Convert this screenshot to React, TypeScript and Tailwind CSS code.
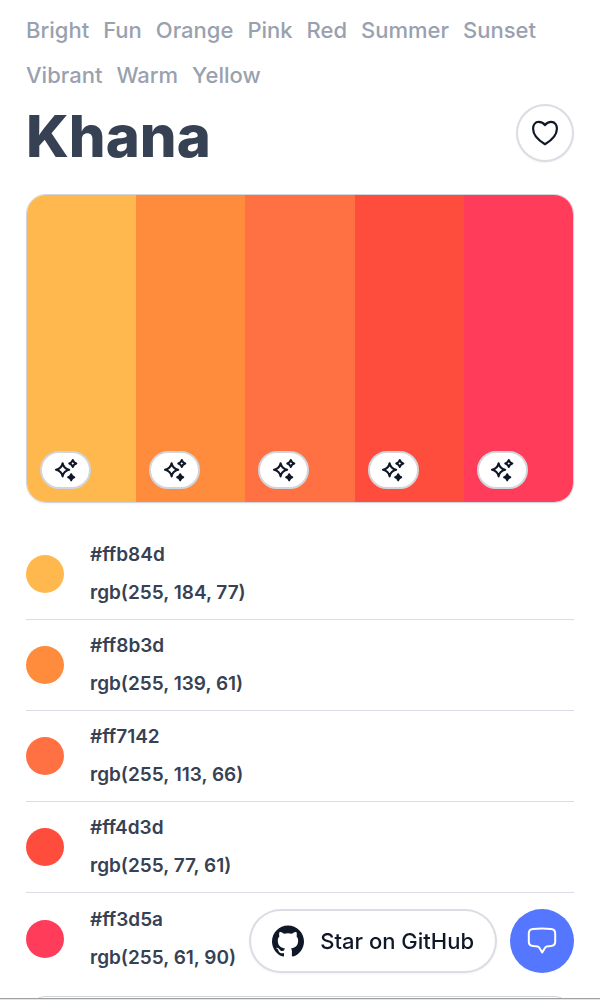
import { SiGithub } from "react-icons/si";

const tags = [
  "Bright",
  "Fun",
  "Orange",
  "Pink",
  "Red",
  "Summer",
  "Sunset",
  "Vibrant",
  "Warm",
  "Yellow",
];

const colors = [
  { hex: "#ffb84d", rgb: "rgb(255, 184, 77)", bg: "bg-[#ffb84d]" },
  { hex: "#ff8b3d", rgb: "rgb(255, 139, 61)", bg: "bg-[#ff8b3d]" },
  { hex: "#ff7142", rgb: "rgb(255, 113, 66)", bg: "bg-[#ff7142]" },
  { hex: "#ff4d3d", rgb: "rgb(255, 77, 61)", bg: "bg-[#ff4d3d]" },
  { hex: "#ff3d5a", rgb: "rgb(255, 61, 90)", bg: "bg-[#ff3d5a]" },
];

function HeartIcon() {
  return (
    <svg
      width="32"
      height="32"
      viewBox="0 0 32 32"
      fill="none"
      stroke="currentColor"
      strokeWidth="2.2"
      strokeLinejoin="round"
      aria-hidden="true"
    >
      <path d="M16 8.2C14.2 5.6 12.2 4.9 9.8 4.9C6.1 4.9 4.1 7.9 4.1 11.7C4.1 18.5 9.6 23.4 16 27.2C22.4 23.4 27.9 18.5 27.9 11.7C27.9 7.9 25.9 4.9 22.2 4.9C19.8 4.9 17.8 5.6 16 8.2Z" />
    </svg>
  );
}

function SparklesIcon() {
  return (
    <svg
      width="24"
      height="24"
      viewBox="0 0 24 24"
      fill="none"
      stroke="currentColor"
      strokeWidth="2.1"
      strokeLinejoin="round"
      aria-hidden="true"
    >
      <path d="M8.6 5.2Q9.7 10.7 15.2 11.8Q9.7 12.9 8.6 18.4Q7.5 12.9 2 11.8Q7.5 10.7 8.6 5.2Z" />
      <path d="M18.8 2Q19.6 4.7 22.3 5.5Q19.6 6.3 18.8 9Q18 6.3 15.3 5.5Q18 4.7 18.8 2Z" />
      <path
        fill="currentColor"
        d="M17.2 16.3Q17.9 18.6 20.2 19.3Q17.9 20 17.2 22.3Q16.5 20 14.2 19.3Q16.5 18.6 17.2 16.3Z"
      />
    </svg>
  );
}

function ChatIcon() {
  return (
    <svg
      width="32"
      height="32"
      viewBox="0 0 32 32"
      fill="none"
      stroke="currentColor"
      strokeWidth="2"
      strokeLinejoin="round"
      aria-hidden="true"
    >
      <path d="M7 3.9Q16 3.1 25 3.9Q29.2 4.3 29.2 8.2V16.5Q29.2 20.7 25 21.1L20.8 21.5Q19.5 21.7 18.9 22.9L16.2 27.5L13.5 22.9Q12.9 21.7 11.6 21.5L7 21.1Q2.8 20.7 2.8 16.5V8.2Q2.8 4.3 7 3.9Z" />
    </svg>
  );
}

export default function App() {
  return (
    <div className="flex h-screen flex-col bg-white font-['Inter',sans-serif] text-gray-700">
      <main className="min-h-0 flex-1 overflow-hidden px-[26px] pt-2">
        <nav className="flex flex-wrap gap-x-3.5 text-[22px] leading-[45px] font-medium text-gray-400">
          {tags.map((tag) => (
            <a key={tag} href={`#${tag.toLowerCase()}`}>
              {tag}
            </a>
          ))}
        </nav>

        <div className="flex items-start justify-between">
          <h1 className="text-[58px] leading-[76px] font-extrabold">Khana</h1>
          <button
            aria-label="Like"
            className="mt-1.5 flex size-[58px] items-center justify-center rounded-full border-2 border-gray-300/80 bg-white text-gray-900 shadow-xs"
          >
            <HeartIcon />
          </button>
        </div>

        {/* Palette */}
        <div className="mt-5 flex h-[309px] overflow-hidden rounded-[20px] border border-gray-300 shadow-xs">
          {colors.map((color) => (
            <div
              key={color.hex}
              className={`flex flex-1 items-end p-[13px] ${color.bg}`}
            >
              <button
                aria-label={`Generate from ${color.hex}`}
                className="flex h-[38px] w-[51px] items-center justify-center rounded-full border-2 border-gray-300 bg-white text-gray-900"
              >
                <SparklesIcon />
              </button>
            </div>
          ))}
        </div>

        {/* Color values */}
        <ul className="mt-[26px] divide-y divide-gray-300/80">
          {colors.map((color) => (
            <li key={color.hex} className="flex h-[91px] items-center gap-[26px]">
              <span className={`size-[38px] rounded-full ${color.bg}`} />
              <div className="flex flex-col items-start text-[19px] leading-[38px] font-semibold">
                <button>{color.hex}</button>
                <button>{color.rgb}</button>
              </div>
            </li>
          ))}
        </ul>

        <div className="mt-3 h-16 rounded-[20px] border border-gray-300" />
      </main>
      <footer className="h-0.5 border-t border-neutral-400 bg-neutral-200" />

      {/* Floating actions */}
      <div className="fixed right-[26px] bottom-[27px] flex items-center gap-[13px]">
        <a
          href="#github"
          className="flex h-16 items-center gap-4 rounded-full border-2 border-gray-300/80 bg-white px-[21px] text-[22px] font-medium text-gray-900 shadow-xs"
        >
          <SiGithub size={32} />
          Star on GitHub
        </a>
        <button
          aria-label="Send feedback"
          className="flex size-16 items-center justify-center rounded-full bg-[#5577ff] text-white"
        >
          <ChatIcon />
        </button>
      </div>
    </div>
  );
}
